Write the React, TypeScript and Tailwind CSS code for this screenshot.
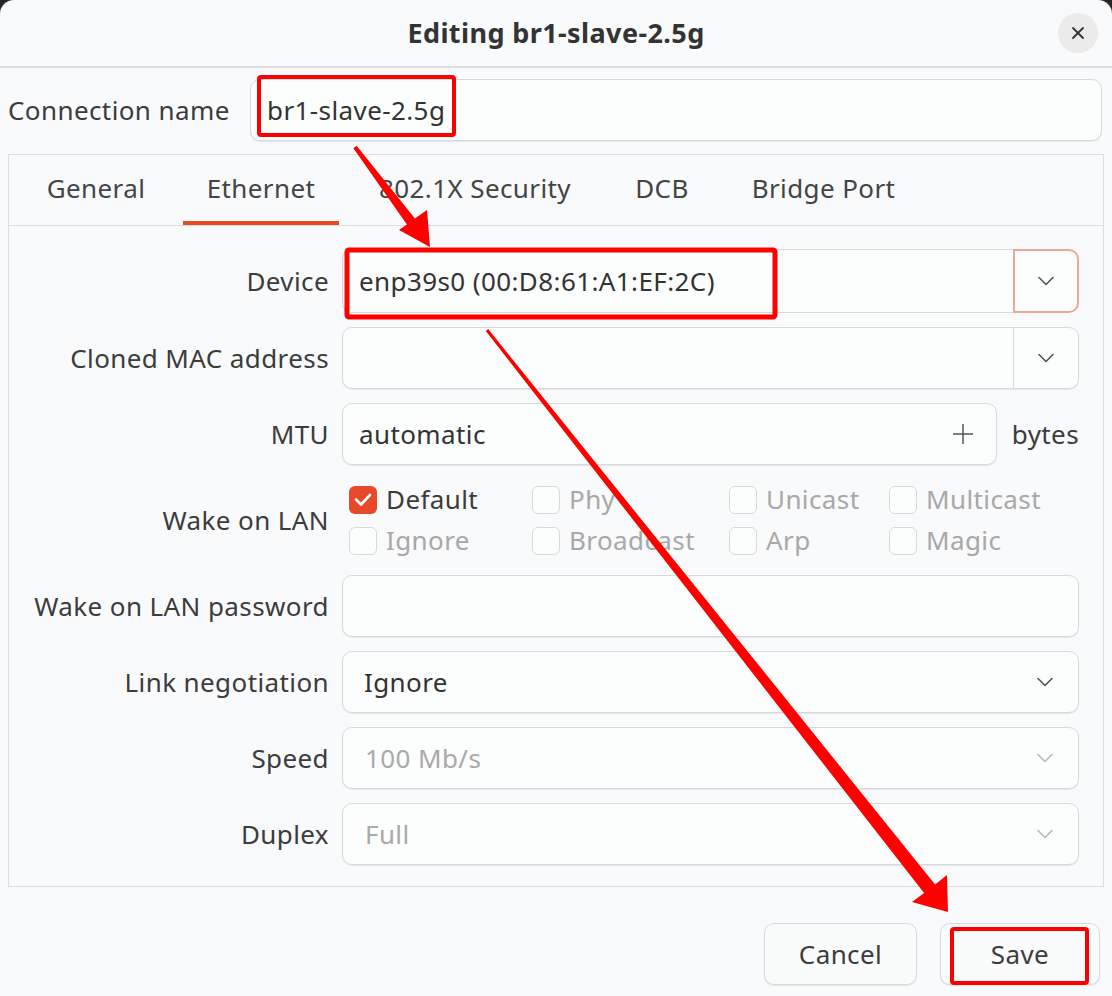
import React from 'react';

const labelCls = 'flex items-center justify-end text-right text-[#3c3c3c]';
const fieldCls =
  'flex items-center rounded-[10px] border border-[#d8d9da] bg-[#fcfdfd] shadow-[0_1px_1px_rgba(0,0,0,0.08)]';

const Chevron = ({ muted = false }: { muted?: boolean }) => (
  <svg width="18" height="10" viewBox="0 0 18 10" fill="none">
    <path
      d="M2 1.5 L9 8.5 L16 1.5"
      stroke={muted ? '#b9b9b9' : '#555555'}
      strokeWidth="1.6"
      strokeLinecap="round"
      strokeLinejoin="round"
    />
  </svg>
);

const Check = ({ label, checked = false, disabled = true }: { label: string; checked?: boolean; disabled?: boolean }) => (
  <div className="flex items-center gap-[9px]">
    {checked ? (
      <span className="flex h-[28px] w-[28px] items-center justify-center rounded-[6px] bg-[#e8492a]">
        <svg width="18" height="14" viewBox="0 0 18 14" fill="none">
          <path d="M2 6.5 L7 11.5 L16 2" stroke="#ffffff" strokeWidth="2.6" strokeLinecap="round" strokeLinejoin="round" />
        </svg>
      </span>
    ) : (
      <span className="h-[28px] w-[28px] rounded-[6px] border border-[#d9d9d9] bg-[#fcfdfd]" />
    )}
    <span className={disabled ? 'text-[#a8a8a8]' : 'text-[#3c3c3c]'}>{label}</span>
  </div>
);

const tabs = [
  { name: 'General', w: 'w-[146px]' },
  { name: 'Ethernet', w: 'w-[156px]', active: true },
  { name: '802.1X Security', w: 'w-[244px]' },
  { name: 'DCB', w: 'w-[102px]' },
  { name: 'Bridge Port', w: 'w-[193px]' },
];

export default function App() {
  return (
    <div className="relative h-[996px] w-[1112px] overflow-hidden bg-[#262626] font-['Noto_Sans',sans-serif] text-[26px] tracking-[0.4px] text-[#3c3c3c]">
      <div className="flex h-full flex-col rounded-t-[14px] bg-[#f9fafb]">
        {/* Header bar */}
        <div className="grid h-[68px] shrink-0 grid-cols-[1fr_auto_1fr] items-center border-b-2 border-[#dcdddd]">
          <div />
          <h1 className="text-[27px] font-bold text-[#333333]">Editing br1-slave-2.5g</h1>
          <div className="flex justify-end pr-[14px]">
            <button className="flex h-[40px] w-[40px] items-center justify-center rounded-full bg-[#ebebeb]">
              <svg width="14" height="14" viewBox="0 0 14 14" fill="none">
                <path d="M2 2 L12 12 M12 2 L2 12" stroke="#333333" strokeWidth="1.8" strokeLinecap="round" />
              </svg>
            </button>
          </div>
        </div>

        {/* Connection name */}
        <div className="mt-[11px] flex h-[62px] items-center pl-[8px] pr-[10px]">
          <span className="w-[242px] shrink-0 text-[#3c3c3c]">Connection name</span>
          <div className={`${fieldCls} h-full flex-1 px-[16px] text-[#333333]`}>br1-slave-2.5g</div>
        </div>

        {/* Notebook */}
        <div className="mx-[8px] mt-[13px] flex h-[733px] flex-col border border-[#dcdddd] bg-[#f9fafb]">
          <div className="flex h-[71px] shrink-0 items-stretch gap-[14px] border-b border-[#dcdddd] pl-[14px]">
            {tabs.map((t) => (
              <div
                key={t.name}
                className={`${t.w} flex items-center justify-center border-b-4 ${
                  t.active ? 'border-[#e9491f]' : 'border-transparent'
                } text-[#444444]`}
              >
                {t.name}
              </div>
            ))}
          </div>

          <div className="grid grid-cols-[320px_1fr] gap-x-[13px] gap-y-[14px] pr-[24px] pt-[23px]">
            <span className={labelCls}>Device</span>
            <div className="flex h-[64px]">
              <div className="flex flex-1 items-center rounded-l-[10px] border border-r-0 border-[#d8d9da] bg-[#fcfdfd] px-[16px] text-[#333333]">
                enp39s0 (00:D8:61:A1:EF:2C)
              </div>
              <div className="flex w-[66px] items-center justify-center rounded-r-[10px] border-2 border-[#f3a596] bg-[#fcfdfd]">
                <Chevron />
              </div>
            </div>

            <span className={labelCls}>Cloned MAC address</span>
            <div className={`${fieldCls} h-[62px]`}>
              <div className="flex-1" />
              <div className="flex h-full w-[65px] items-center justify-center border-l border-[#d8d9da]">
                <Chevron />
              </div>
            </div>

            <span className={labelCls}>MTU</span>
            <div className="flex h-[62px] items-center gap-[15px]">
              <div className={`${fieldCls} h-full flex-1 pl-[16px] pr-[22px] text-[#333333]`}>
                <span className="flex-1">automatic</span>
                <svg width="22" height="22" viewBox="0 0 22 22" fill="none">
                  <path d="M11 1 V21 M1 11 H21" stroke="#555555" strokeWidth="1.5" />
                </svg>
              </div>
              <span className="text-[#3c3c3c]">bytes</span>
            </div>

            <span className={labelCls}>Wake on LAN</span>
            <div className="grid h-[82px] grid-cols-[183px_197px_160px_1fr] grid-rows-2 items-center pl-[7px]">
              <Check label="Default" checked disabled={false} />
              <Check label="Phy" />
              <Check label="Unicast" />
              <Check label="Multicast" />
              <Check label="Ignore" />
              <Check label="Broadcast" />
              <Check label="Arp" />
              <Check label="Magic" />
            </div>

            <span className={labelCls}>Wake on LAN password</span>
            <div className={`${fieldCls} h-[62px]`} />

            <span className={labelCls}>Link negotiation</span>
            <div className={`${fieldCls} h-[62px] justify-between pl-[21px] pr-[24px] text-[#333333]`}>
              <span>Ignore</span>
              <Chevron />
            </div>

            <span className={labelCls}>Speed</span>
            <div className={`${fieldCls} h-[62px] justify-between pl-[22px] pr-[24px] text-[#aaaaaa]`}>
              <span>100 Mb/s</span>
              <Chevron muted />
            </div>

            <span className={labelCls}>Duplex</span>
            <div className={`${fieldCls} h-[62px] justify-between pl-[22px] pr-[24px] text-[#aaaaaa]`}>
              <span>Full</span>
              <Chevron muted />
            </div>
          </div>
        </div>

        {/* Buttons */}
        <div className="mt-[36px] flex justify-end gap-[23px] pr-[12px]">
          <button className="h-[62px] w-[153px] rounded-[10px] border border-[#d8d9da] bg-[#fafbfb] text-[#3c3c3c] shadow-[0_1px_1px_rgba(0,0,0,0.08)]">
            Cancel
          </button>
          <button className="h-[62px] w-[160px] rounded-[10px] border border-[#d8d9da] bg-[#fafbfb] text-[#3c3c3c] shadow-[0_1px_1px_rgba(0,0,0,0.08)]">
            Save
          </button>
        </div>
      </div>

      {/* Red annotations */}
      <svg className="pointer-events-none absolute inset-0" width="1112" height="996" viewBox="0 0 1112 996">
        <rect x="259" y="77" width="195" height="58" fill="none" stroke="#ff0000" strokeWidth="4" rx="2" />
        <rect x="347" y="250" width="428" height="67" fill="none" stroke="#ff0000" strokeWidth="5" rx="2" />
        <rect x="952" y="929" width="135" height="54" fill="none" stroke="#ff0000" strokeWidth="4" rx="2" />
        <polygon
          points="356.6,145.8 414.9,218.6 427,210 430,247 399,230 406.9,224.6 353.4,148.2"
          fill="#ff0000"
        />
        <polygon
          points="488.2,329.1 935.1,884.5 947,875 948,912 912,902 924.1,893.1 485.8,330.9"
          fill="#ff0000"
        />
      </svg>
    </div>
  );
}
